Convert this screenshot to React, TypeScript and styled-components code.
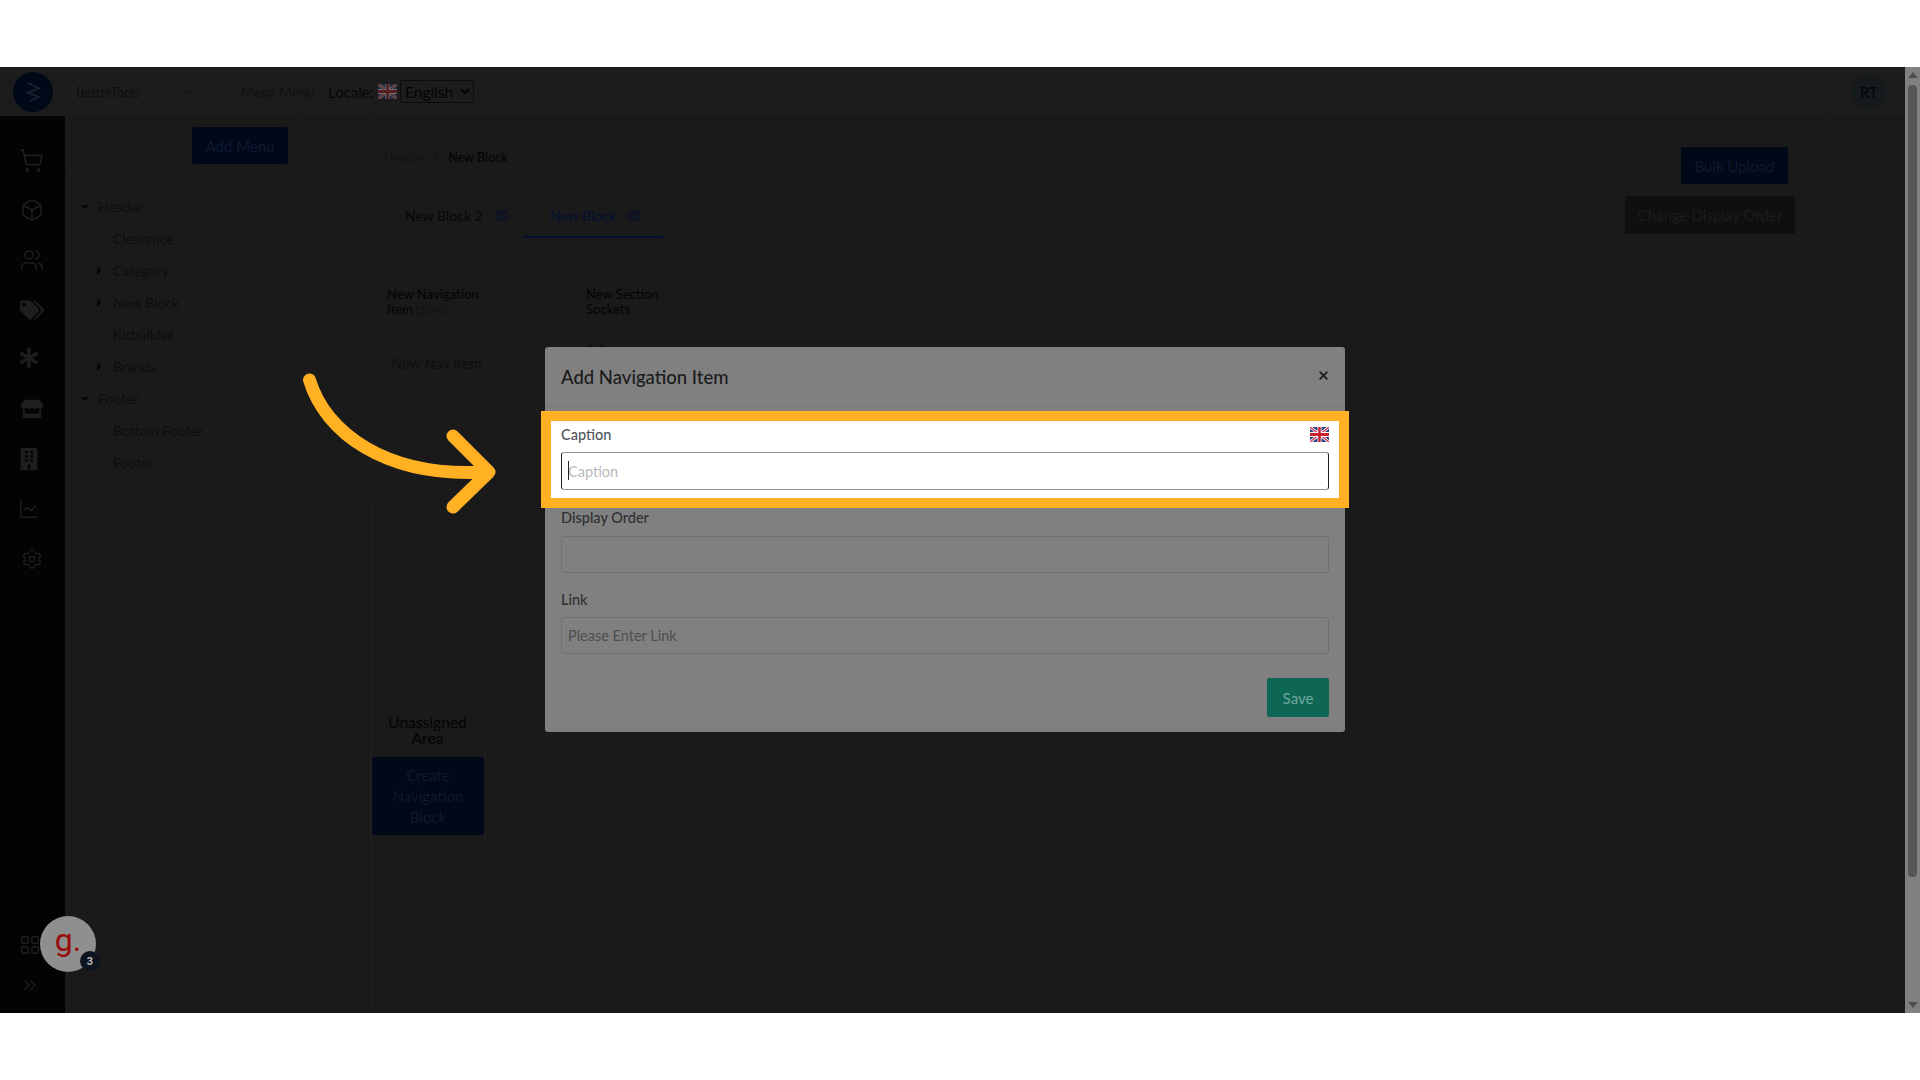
import { FC } from "react";
import styled, { createGlobalStyle } from "styled-components";
import {
  Box,
  ChartLine,
  ChevronDown,
  ChevronRight,
  ChevronsRight,
  Eye,
  LayoutGrid,
  Settings,
  ShoppingCart,
  Users,
  X,
} from "lucide-react";
import { FaAsterisk, FaBuilding, FaCaretDown, FaCaretRight, FaStore, FaTags } from "react-icons/fa";

type TreeItem = { label: string; depth: 0 | 1; caret?: "down" | "right" };

const treeItems: TreeItem[] = [
  { label: "Header", depth: 0, caret: "down" },
  { label: "Clearance", depth: 1 },
  { label: "Category", depth: 1, caret: "right" },
  { label: "New Block", depth: 1, caret: "right" },
  { label: "Kitbuilder", depth: 1 },
  { label: "Brands", depth: 1, caret: "right" },
  { label: "Footer", depth: 0, caret: "down" },
  { label: "Bottom Footer", depth: 1 },
  { label: "Footer", depth: 1 },
];

const Flag: FC<{ $dim?: boolean }> = ({ $dim }) => (
  <FlagSvg viewBox="0 0 60 40" preserveAspectRatio="none" $dim={$dim}>
    <rect width="60" height="40" fill="#2b3f86" />
    <path d="M0 0 60 40M60 0 0 40" stroke="#fff" strokeWidth="8" />
    <path d="M0 0 60 40M60 0 0 40" stroke="#c8202f" strokeWidth="3" />
    <path d="M30 0V40M0 20H60" stroke="#fff" strokeWidth="13" />
    <path d="M30 0V40M0 20H60" stroke="#c8202f" strokeWidth="8" />
  </FlagSvg>
);

export default function App() {
  return (
    <>
      <GlobalStyle />
      <Frame>
        <Page>
          <TopBar>
            <Logo>
              <svg viewBox="0 0 24 30" width="17" height="22" fill="none" stroke="#1a2230" strokeWidth="2.6">
                <path d="M4 2 20 10 4 16 20 22 6 28" />
              </svg>
            </Logo>
            <StoreName>BetterTools</StoreName>
            <StoreChevron>
              <ChevronDown size={12} strokeWidth={2} />
            </StoreChevron>
            <CrumbChevron>
              <ChevronRight size={12} strokeWidth={1.5} />
            </CrumbChevron>
            <PageTitle>Mega Menu</PageTitle>
            <LocaleLabel>Locale:</LocaleLabel>
            <Flag $dim />
            <LocaleSelect defaultValue="English">
              <option>English</option>
            </LocaleSelect>
            <Avatar>RT</Avatar>
          </TopBar>
          <Body>
            <Sidebar>
              <SideGroup>
                <ShoppingCart size={25} strokeWidth={1.6} />
                <Box size={24} strokeWidth={1.6} />
                <Users size={24} strokeWidth={1.6} />
                <FaTags size={24} />
                <FaAsterisk size={20} />
                <FaStore size={22} />
                <FaBuilding size={22} />
                <ChartLine size={22} strokeWidth={1.6} />
                <Settings size={22} strokeWidth={1.6} />
              </SideGroup>
              <SideFooter>
                <LayoutGrid size={22} strokeWidth={1.6} />
                <ChevronsRight size={20} strokeWidth={1.6} />
              </SideFooter>
            </Sidebar>
            <TreePanel>
              <TreeHead>
                <AddMenu>Add Menu</AddMenu>
              </TreeHead>
              <TreeList>
                {treeItems.map((item, index) => (
                  <TreeRow key={index} $depth={item.depth}>
                    <Caret>
                      {item.caret === "down" && <FaCaretDown size={13} />}
                      {item.caret === "right" && <FaCaretRight size={13} />}
                    </Caret>
                    {item.label}
                  </TreeRow>
                ))}
              </TreeList>
            </TreePanel>
            <Main>
              <Content>
                <TopRow>
                  <div>
                    <Breadcrumb>
                      <span>Header</span>
                      <ChevronRight size={12} strokeWidth={1.5} />
                      <strong>New Block</strong>
                    </Breadcrumb>
                    <Tabs>
                      <Tab>
                        New Block 2 <Eye size={15} strokeWidth={1.8} color="#03102f" />
                      </Tab>
                      <Tab $active>
                        New Block <Eye size={15} strokeWidth={1.8} color="#03102f" />
                      </Tab>
                    </Tabs>
                  </div>
                  <Actions>
                    <BulkUpload>Bulk Upload</BulkUpload>
                    <ChangeOrder>Change Display Order</ChangeOrder>
                  </Actions>
                </TopRow>
                <Cards>
                  <NavCard>
                    <CardHead>
                      <div>New Navigation</div>
                      <div>
                        Item <small>(50%)</small>
                      </div>
                    </CardHead>
                    <NavItem>New Nav Item</NavItem>
                  </NavCard>
                  <SectionCard>
                    <SectionHead>New Section Sockets</SectionHead>
                    <SectionItem>1.0</SectionItem>
                  </SectionCard>
                </Cards>
                <Unassigned>
                  <h4>Unassigned Area</h4>
                  <CreateBlock>Create Navigation Block</CreateBlock>
                </Unassigned>
              </Content>
            </Main>
          </Body>
        </Page>
        <Scrollbar>
          <ArrowUp />
          <Thumb />
          <ArrowDown />
        </Scrollbar>

        <Modal>
          <ModalHead>
            <ModalTitle>Add Navigation Item</ModalTitle>
            <CloseIcon>
              <X size={13} strokeWidth={3.4} color="#222" />
            </CloseIcon>
          </ModalHead>
          <ModalBody>
            <FocusField>
              <LabelRow>
                <FocusLabel>Caption</FocusLabel>
                <Flag />
              </LabelRow>
              <InputWrap>
                <FocusInput placeholder="Caption" />
                <TextCaret />
              </InputWrap>
            </FocusField>
            <OrderLabel>Display Order</OrderLabel>
            <DimInput />
            <LinkLabel>Link</LinkLabel>
            <DimInput placeholder="Please Enter Link" />
            <SaveButton>Save</SaveButton>
          </ModalBody>
        </Modal>

        <ArrowSvg viewBox="295 367 210 150">
          <path
            d="M309.5 380C325 432 385 478 486 472M453 436 489 472 453 507"
            fill="none"
            stroke="#ffb023"
            strokeWidth="13"
            strokeLinecap="round"
            strokeLinejoin="round"
          />
        </ArrowSvg>

        <Gist>
          g<i>.</i>
          <GistBadge>3</GistBadge>
        </Gist>
      </Frame>
    </>
  );
}

const GlobalStyle = createGlobalStyle`
  html, body {
    margin: 0;
    height: 100%;
    overflow: hidden;
    background: #fff;
    font-family: Lato, "Open Sans", sans-serif;
  }
  * { box-sizing: border-box; }
`;

const Frame = styled.div`
  position: relative;
  display: flex;
  width: 1920px;
  height: 946px;
  margin-top: 67px;
  overflow: hidden;
  background: #1a1a1a;
`;

const Page = styled.div`
  display: flex;
  flex-direction: column;
  flex: 1;
  min-width: 0;
`;

const TopBar = styled.header`
  display: flex;
  align-items: center;
  flex: none;
  height: 49px;
  padding: 0 19px 0 13px;
  background: #1c1c1c;
`;

const Logo = styled.div`
  display: flex;
  align-items: center;
  justify-content: center;
  width: 40px;
  height: 40px;
  border-radius: 50%;
  background: #010817;
`;

const StoreName = styled.span`
  width: 105px;
  margin-left: 23px;
  font-size: 13px;
  color: #0e0e0e;
`;

const StoreChevron = styled.span`
  display: flex;
  width: 39px;
  color: #0c0c0c;
`;

const CrumbChevron = styled.span`
  display: flex;
  width: 21px;
  color: #141414;
`;

const PageTitle = styled.span`
  width: 87px;
  font-size: 14px;
  color: #111;
`;

const LocaleLabel = styled.span`
  width: 50px;
  font-size: 15px;
  color: #050505;
`;

const FlagSvg = styled.svg<{ $dim?: boolean }>`
  width: 19px;
  height: 15px;
  flex: none;
  opacity: ${(p) => (p.$dim ? 0.35 : 1)};
`;

const LocaleSelect = styled.select`
  width: 74px;
  height: 23px;
  margin-left: 3px;
  border: 1px solid #0c0c0c;
  border-radius: 2px;
  background: transparent;
  color: #050505;
  font-family: inherit;
  font-size: 15.5px;
`;

const Avatar = styled.div`
  display: flex;
  align-items: center;
  justify-content: center;
  width: 34px;
  height: 34px;
  margin-left: auto;
  border-radius: 50%;
  background: #151a1c;
  color: #050505;
  font-size: 15px;
  font-weight: 500;
`;

const Body = styled.div`
  display: flex;
  flex: 1;
  min-height: 0;
`;

const Sidebar = styled.nav`
  display: flex;
  flex-direction: column;
  justify-content: space-between;
  flex: none;
  width: 65px;
  padding: 32px 0 18px;
  background: #030306;
  color: #1e1e1e;
`;

const SideGroup = styled.div`
  display: grid;
  grid-auto-rows: 50px;
  justify-items: center;
  align-items: start;
  padding-right: 2px;

  & > :nth-child(5),
  & > :nth-child(7),
  & > :nth-child(8) {
    margin-right: 5px;
  }
`;

const SideFooter = styled.div`
  display: flex;
  flex-direction: column;
  align-items: center;
  gap: 19px;
  padding-right: 6px;
`;

const TreePanel = styled.aside`
  flex: none;
  width: 235px;
`;

const TreeHead = styled.div`
  display: flex;
  justify-content: flex-end;
  height: 60px;
  padding: 11px 12px 0 0;
  border-bottom: 1px solid #1e1e1e;
`;

const AddMenu = styled.button`
  width: 96px;
  height: 37px;
  border: 0;
  border-radius: 2px;
  background: #010817;
  color: #0e1a33;
  font-family: inherit;
  font-size: 15px;
`;

const TreeList = styled.ul`
  margin: 0;
  padding: 14px 0 0;
  list-style: none;
`;

const TreeRow = styled.li<{ $depth: 0 | 1 }>`
  display: flex;
  align-items: center;
  height: 32px;
  padding-left: ${(p) => (p.$depth === 0 ? 13 : 28)}px;
  font-size: 14px;
  color: #0d0d0d;
`;

const Caret = styled.span`
  display: flex;
  width: 29px;
  margin-left: -9px;
  padding-left: 9px;
  color: #050505;
`;

const Main = styled.main`
  flex: 1;
  min-width: 0;
  padding-left: 70px;
  border-left: 1px solid #1e1e1e;
`;

const Content = styled.div`
  width: 1454px;
  height: 100%;
  border-left: 1px solid #1e1e1e;
  border-right: 1px solid #1e1e1e;
`;

const TopRow = styled.div`
  display: flex;
  justify-content: space-between;
  height: 125px;
  border-bottom: 1px solid #1e1e1e;
`;

const Breadcrumb = styled.div`
  display: flex;
  align-items: center;
  gap: 6px;
  height: 18px;
  margin: 32px 0 0 12px;
  font-size: 12.5px;
  color: #141414;

  svg {
    color: #0c0c0c;
  }

  strong {
    color: #050505;
    font-weight: 500;
  }
`;

const Tabs = styled.div`
  display: flex;
  margin-top: 30px;
`;

const Tab = styled.div<{ $active?: boolean }>`
  display: flex;
  align-items: center;
  gap: 11px;
  width: ${(p) => (p.$active ? 140 : 151)}px;
  height: 42px;
  padding: 0 0 2px ${(p) => (p.$active ? 27 : 33)}px;
  border-bottom: 2px solid ${(p) => (p.$active ? "#03102f" : "transparent")};
  font-size: 14px;
  color: ${(p) => (p.$active ? "#02102f" : "#070707")};
`;

const Actions = styled.div`
  display: flex;
  flex-direction: column;
  align-items: flex-end;
  gap: 12px;
  padding: 31px 29px 0 0;
`;

const BulkUpload = styled.button`
  width: 107px;
  height: 37px;
  margin-right: 7px;
  border: 0;
  border-radius: 2px;
  background: #010817;
  color: #10192e;
  font-family: inherit;
  font-size: 15px;
`;

const ChangeOrder = styled.button`
  width: 170px;
  height: 38px;
  border: 0;
  border-radius: 2px;
  background: #0e0f10;
  color: #1c1d1e;
  font-family: inherit;
  font-size: 15px;
`;

const Cards = styled.div`
  display: flex;
  align-items: flex-start;
  gap: 14px;
  margin: 29px 0 14px 3px;
`;

const NavCard = styled.section`
  width: 184px;
  height: 223px;
  border: 1px solid #1e1e1e;
`;

const CardHead = styled.h4`
  height: 73px;
  margin: 0;
  padding: 16px 0 0 11px;
  border-bottom: 1px solid #1e1e1e;
  font-size: 13px;
  font-weight: 500;
  line-height: 15px;
  color: #050505;

  small {
    font-size: 12px;
    font-weight: 400;
    color: #111;
  }
`;

const NavItem = styled.div`
  padding: 11px 0 0 15px;
  font-size: 14.5px;
  color: #0f0f0f;
`;

const SectionCard = styled.section`
  width: 114px;
  height: 223px;
  border: 1px solid #1e1e1e;
`;

const SectionHead = styled.h4`
  height: 62px;
  margin: 0;
  padding: 16px 20px 0 12px;
  border-bottom: 1px solid #1e1e1e;
  font-size: 13px;
  font-weight: 500;
  line-height: 15px;
  color: #050505;
`;

const SectionItem = styled.div`
  padding: 8px 0 0 12px;
  font-size: 14px;
  color: #0a0a0a;
`;

const Unassigned = styled.section`
  width: 115px;
  height: 505px;
  margin-left: -2px;
  padding-top: 207px;
  border-left: 1px solid #1e1e1e;
  border-right: 1px solid #1e1e1e;
  text-align: center;

  h4 {
    margin: 0 0 11px;
    padding: 0 12px;
    font-size: 15.5px;
    font-weight: 500;
    line-height: 16px;
    color: #050505;
  }
`;

const CreateBlock = styled.button`
  display: block;
  width: 112px;
  height: 78px;
  margin-left: 1px;
  padding: 6px 8px;
  border: 0;
  border-radius: 2px;
  background: #010817;
  color: #10192e;
  font-family: inherit;
  font-size: 15px;
  line-height: 21px;
`;

const Scrollbar = styled.div`
  display: flex;
  flex-direction: column;
  align-items: center;
  flex: none;
  width: 15px;
  padding: 5px 0;
  background: #808080;
`;

const ArrowUp = styled.span`
  width: 0;
  height: 0;
  border: 5px solid transparent;
  border-top: 0;
  border-bottom: 6px solid #4e4e4e;
`;

const ArrowDown = styled.span`
  width: 0;
  height: 0;
  margin-top: auto;
  border: 5px solid transparent;
  border-bottom: 0;
  border-top: 6px solid #4e4e4e;
`;

const Thumb = styled.span`
  width: 9px;
  height: 792px;
  margin-top: 7px;
  border-radius: 4px;
  background: #555;
`;

const Modal = styled.div`
  position: absolute;
  left: 545px;
  top: 280px;
  width: 800px;
  height: 385px;
  border-radius: 3px;
  background: #808080;
`;

const ModalHead = styled.div`
  display: flex;
  align-items: flex-start;
  justify-content: space-between;
  height: 60px;
  padding: 18px 16px 0;
  border-bottom: 1px solid #777;
`;

const ModalTitle = styled.h2`
  margin: 0;
  font-size: 18.5px;
  font-weight: 500;
  line-height: 24px;
  color: #1b1b1b;
`;

const CloseIcon = styled.span`
  display: flex;
  margin: 4px -1px 0 0;
`;

const ModalBody = styled.div`
  display: flex;
  flex-direction: column;
  padding: 14px 16px 0;
`;

const FocusField = styled.div`
  position: relative;
  margin: 0 -10px;
  padding: 3px 10px 8px;
  background: #fff;
  outline: 10px solid #ffb023;
`;

const LabelRow = styled.div`
  display: flex;
  align-items: center;
  justify-content: space-between;
  height: 20px;
  margin-bottom: 8px;
`;

const FocusLabel = styled.label`
  font-size: 14.5px;
  font-weight: 500;
  color: #50555c;
`;

const InputWrap = styled.div`
  position: relative;
`;

const FocusInput = styled.input`
  display: block;
  width: 100%;
  height: 38px;
  padding: 0 6px;
  border: 1px solid #1f2226;
  border-top-color: #8f9397;
  border-bottom-color: #8f9397;
  border-radius: 3px;
  background: #fff;
  outline: 0;
  font-family: inherit;
  font-size: 14.5px;

  &::placeholder {
    color: #b6b9be;
    opacity: 1;
  }
`;

const TextCaret = styled.span`
  position: absolute;
  left: 7px;
  top: 9px;
  width: 1px;
  height: 19px;
  background: #222;
`;

const OrderLabel = styled.label`
  margin: 10px 0 8px;
  font-size: 14.5px;
  font-weight: 500;
  line-height: 20px;
  color: #2e3033;
`;

const LinkLabel = styled(OrderLabel)`
  margin: 17px 0 7px;
`;

const DimInput = styled.input`
  display: block;
  width: 100%;
  height: 37px;
  padding: 0 6px;
  border: 1px solid #707070;
  border-radius: 3px;
  background: transparent;
  font-family: inherit;
  font-size: 14.5px;

  &::placeholder {
    color: #4e4e4e;
    opacity: 1;
  }
`;

const SaveButton = styled.button`
  align-self: flex-end;
  width: 62px;
  height: 39px;
  margin-top: 24px;
  border: 0;
  border-radius: 2px;
  background: #0e6655;
  color: #6fa99d;
  font-family: inherit;
  font-size: 15px;
`;

const ArrowSvg = styled.svg`
  position: absolute;
  left: 295px;
  top: 300px;
  width: 210px;
  height: 150px;
`;

const Gist = styled.div`
  position: absolute;
  left: 40px;
  top: 849px;
  display: flex;
  align-items: center;
  justify-content: center;
  width: 56px;
  height: 56px;
  padding-bottom: 8px;
  border-radius: 50%;
  background: #8f8f8f;
  color: #990c0c;
  font-family: Roboto, sans-serif;
  font-size: 32px;
  font-weight: 400;

  i {
    font-style: normal;
  }
`;

const GistBadge = styled.span`
  position: absolute;
  right: -4px;
  bottom: 1px;
  display: flex;
  align-items: center;
  justify-content: center;
  width: 20px;
  height: 20px;
  border-radius: 50%;
  background: #0e1420;
  color: #b9b9b9;
  font-size: 11px;
  font-weight: 700;
`;
